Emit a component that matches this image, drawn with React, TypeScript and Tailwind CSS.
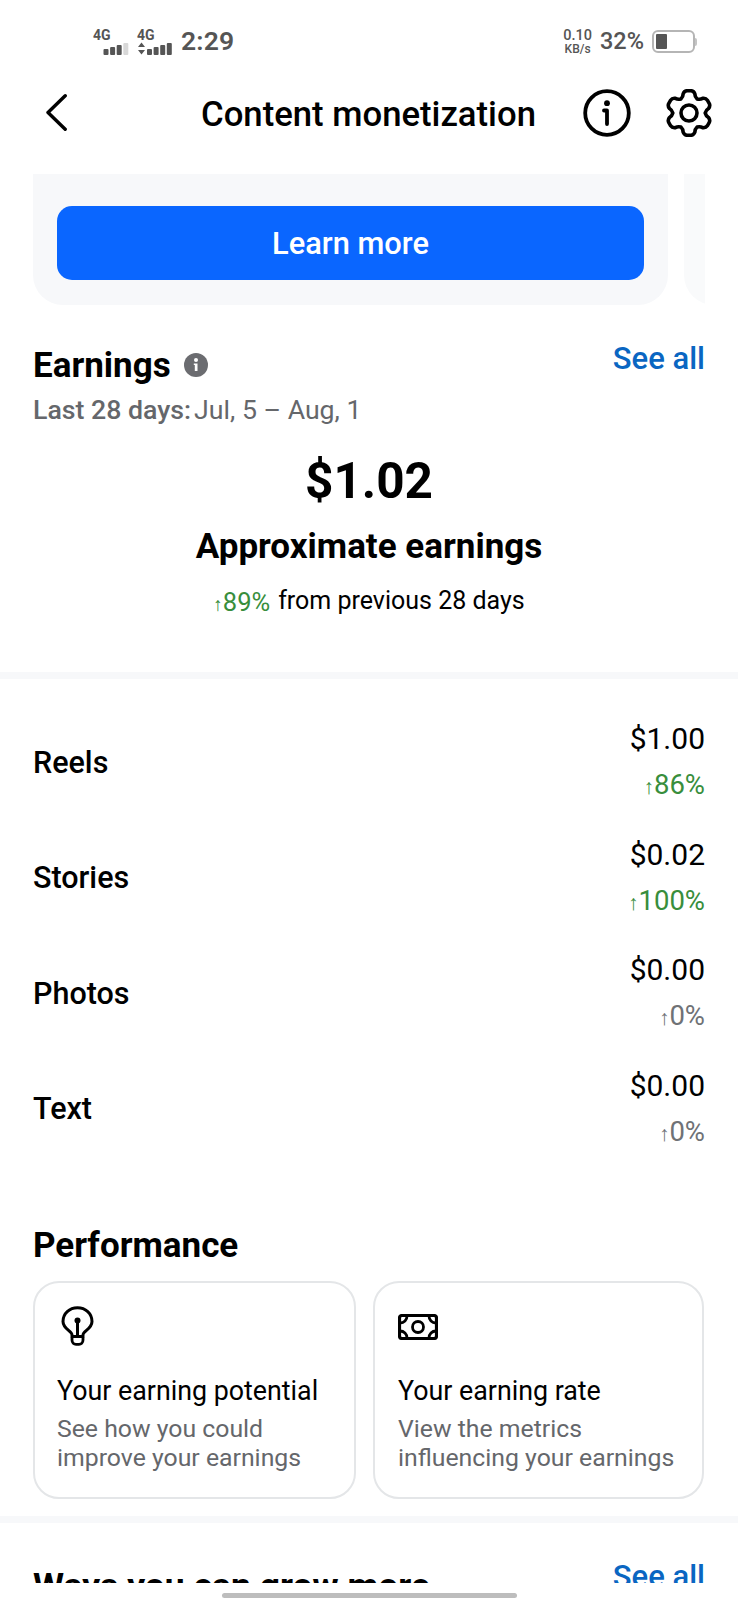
import type { ReactNode } from "react";

const font = { fontFamily: "Roboto, 'Noto Sans', sans-serif" };

function gearPath() {
  const c = 24;
  const pt = (deg: number, r: number) => {
    const a = (deg * Math.PI) / 180;
    return `${(c + r * Math.cos(a)).toFixed(2)} ${(c + r * Math.sin(a)).toFixed(2)}`;
  };
  let d = "";
  for (let k = 0; k < 6; k++) {
    const m = -90 + k * 60;
    const start = pt(m - 30, 16.2);
    if (k === 0) d += `M${start} `;
    d += `Q${pt(m - 20, 17.2)} ${pt(m - 17, 20)} `;
    d += `Q${pt(m - 12, 22.6)} ${pt(m - 5, 22.4)} `;
    d += `L${pt(m + 5, 22.4)} `;
    d += `Q${pt(m + 12, 22.6)} ${pt(m + 17, 20)} `;
    d += `Q${pt(m + 20, 17.2)} ${pt(m + 30, 16.2)} `;
  }
  return d + "Z";
}

function Signal({ bars, arrows }: { bars: string[]; arrows?: boolean }) {
  const heights = [6, 8, 10, 12];
  return (
    <svg width={arrows ? 36 : 27} height="13" viewBox={arrows ? "0 0 36 13" : "0 0 27 13"} className="block">
      {arrows && <path d="M4.500 0.500 L8 5 H1 Z M4.500 12.500 L8 8 H1 Z" fill="#555" />}
      {heights.map((h, i) => (
        <rect key={i} x={(arrows ? 10 : 0.5) + i * 6.6} y={13 - h} width="5" height={h} rx="1" fill={bars[i]} />
      ))}
    </svg>
  );
}

function StatusBar() {
  return (
    <div className="h-[80px] pt-[3px] flex items-center justify-between pl-[93px] pr-[41px] text-[#555]">
      <div className="flex items-center">
        <div className="flex flex-col">
          <span className="text-[14px] leading-[13px] font-bold text-[#555]">4G</span>
          <div className="ml-[10px]">
            <Signal bars={["#555", "#555", "#555", "#d8d8d8"]} />
          </div>
        </div>
        <div className="ml-[7px] flex flex-col">
          <span className="text-[14px] leading-[13px] font-bold text-[#555]">4G</span>
          <Signal arrows bars={["#555", "#555", "#555", "#555"]} />
        </div>
        <span className="ml-[8px] text-[26.500px] leading-none font-semibold tracking-[0.2px]">2:29</span>
      </div>
      <div className="flex items-center">
        <div className="flex flex-col items-center text-[#555]">
          <span className="text-[14.500px] leading-[14px] font-medium">0.10</span>
          <span className="text-[12px] leading-[12px] font-medium">KB/s</span>
        </div>
        <span className="ml-[8px] text-[23.500px] leading-none font-medium">32%</span>
        <div className="ml-[8px] flex items-center">
          <div className="w-[43px] h-[23px] rounded-[6px] border-2 border-[#b5b5b5] p-[2px]">
            <div className="w-[11px] h-full rounded-[1px] bg-[#555]" />
          </div>
          <div className="w-[2px] h-[8px] bg-[#c4c4c4] rounded-r-sm" />
        </div>
      </div>
    </div>
  );
}

function Header() {
  return (
    <div className="h-[65px] mb-[29px] flex items-center pl-[46px]">
      <svg width="21" height="37" viewBox="0 0 21 37" fill="none" className="shrink-0">
        <path d="M19.200 1.800 L2 18.500 L19.200 35.200" stroke="#000" strokeWidth="3.400" strokeLinecap="round" strokeLinejoin="round" />
      </svg>
      <div className="ml-[134px] w-[336px] pt-[3px] shrink-0 whitespace-nowrap text-[34.700px] leading-none font-medium text-black">
        Content monetization
      </div>
      <svg width="48" height="48" viewBox="0 0 48 48" fill="none" className="shrink-0 ml-[46px]">
        <circle cx="24" cy="24" r="21.800" stroke="#000" strokeWidth="3.800" />
        <circle cx="24" cy="14.200" r="2.900" fill="#000" />
        <path d="M21 21.500 H24 V35" stroke="#000" strokeWidth="3.800" strokeLinecap="round" strokeLinejoin="round" />
      </svg>
      <svg width="48" height="48" viewBox="0 0 48 48" fill="none" className="shrink-0 ml-[34px]">
        <path d={gearPath()} stroke="#000" strokeWidth="3.600" strokeLinejoin="round" />
        <circle cx="24" cy="24" r="8" stroke="#000" strokeWidth="3.600" />
      </svg>
    </div>
  );
}

function Carousel() {
  return (
    <div className="ml-[33px] w-[672px] h-[131px] overflow-hidden flex gap-[16px]">
      <div className="w-[635px] shrink-0 bg-[#f7f8fa] rounded-b-[30px] pt-[32px] px-[24px]">
        <div className="h-[74px] pt-[3px] rounded-[15px] bg-[#0a66ff] flex items-center justify-center text-white text-[30.800px] font-medium">
          Learn more
        </div>
      </div>
      <div className="w-[635px] shrink-0 bg-[#f9fafb] rounded-bl-[30px]" />
    </div>
  );
}

function Earnings() {
  return (
    <div className="px-[33px] pt-[37px] h-[367px]">
      <div className="flex justify-between items-start h-[46px]">
        <div className="flex items-center h-[46px]">
          <span className="text-[35px] leading-none font-bold text-black">Earnings</span>
          <svg width="24" height="24" viewBox="0 0 24 24" className="ml-[13px]">
            <circle cx="12" cy="12" r="12" fill="#6b6c70" />
            <circle cx="12" cy="7" r="2" fill="#fff" />
            <path d="M9.800 10.500 H13.500 V18 H10.800 V12 H9.800 Z" fill="#fff" />
          </svg>
        </div>
        <span className="mt-[2px] text-[31px] leading-[30px] font-medium text-[#0a66c2]">See all</span>
      </div>
      <div className="mt-[4px] flex text-[26.700px] leading-[36px] text-[#65676b]">
        <span className="font-medium">Last 28 days:</span>
        <span className="ml-[3px]">Jul, 5 – Aug, 1</span>
      </div>
      <div className="mt-[23px] text-center text-[49.500px] leading-[60px] font-bold text-black">$1.02</div>
      <div className="mt-[14px] text-center text-[35px] leading-[44px] font-bold text-black">Approximate earnings</div>
      <div className="mt-[11px] flex justify-center items-end leading-[36px] text-black">
        <span className="text-[25.500px] text-[#388e3c] relative top-[4px]"><span className="text-[19px]">↑</span>89%</span>
        <span className="ml-[8px] text-[25px]">from previous 28 days</span>
      </div>
    </div>
  );
}

function Row({ label, value, pct, green }: { label: string; value: string; pct: string; green?: boolean }) {
  return (
    <div className="h-[92px] flex items-center justify-between">
      <span className="pt-[2px] text-[30.500px] leading-none font-medium text-black">{label}</span>
      <div className="flex flex-col items-end pt-[2px]">
        <span className="text-[30px] leading-[46px] text-black">{value}</span>
        <span className={`text-[27.500px] leading-[46px] ${green ? "text-[#388e3c]" : "text-[#6f7276]"}`}>
          <span className="text-[21px]">↑</span>{pct}
        </span>
      </div>
    </div>
  );
}

function Bulb() {
  return (
    <svg width="33" height="40" viewBox="0 0 33 40" fill="none">
      <path d="M11 30.500 V29 C11 25 2 23 2 15.500 C2 7.500 8.500 1.700 16.500 1.700 C24.500 1.700 31 7.500 31 15.500 C31 23 22 25 22 29 V30.500 Z" stroke="#000" strokeWidth="3" strokeLinejoin="round" />
      <path d="M11 31 V34 C11 36.800 13 38.300 15 38.300 H18 C20 38.300 22 36.800 22 34 V31" stroke="#000" strokeWidth="2.800" />
      <circle cx="16.500" cy="14.500" r="3" fill="#000" />
      <path d="M16.500 15 V30" stroke="#000" strokeWidth="3" />
    </svg>
  );
}

function Money() {
  return (
    <svg width="40" height="26" viewBox="0 0 40 26" fill="none">
      <rect x="1.500" y="1.500" width="37" height="23" rx="2.500" stroke="#000" strokeWidth="3.200" />
      <circle cx="20" cy="13" r="5.500" stroke="#000" strokeWidth="2.800" />
      <path d="M2 9 C6 9 9 6 9 2 M2 17 C6 17 9 20 9 24 M38 9 C34 9 31 6 31 2 M38 17 C34 17 31 20 31 24" stroke="#000" strokeWidth="2.800" />
    </svg>
  );
}

function PerfCard({ icon, title, lines, className, iconClass }: { icon: ReactNode; title: string; lines: string[]; className: string; iconClass: string }) {
  return (
    <div className={`h-[218px] rounded-[26px] border-2 border-[#e4e6e8] ${className}`}>
      <div className={`h-[85px] flex items-center ${iconClass}`}>{icon}</div>
      <div className="text-[26.800px] leading-[36px] text-black mt-[5px]">{title}</div>
      <div className="text-[24.800px] leading-[29px] text-[#65676b] mt-[5px]">
        {lines.map((l) => <div key={l}>{l}</div>)}
      </div>
    </div>
  );
}

function Divider() {
  return <div className="h-[7px] bg-[#f7f8fa]" />;
}

export default function App() {
  return (
    <div className="w-[738px] h-[1600px] bg-white overflow-hidden flex flex-col" style={font}>
      <div className="h-[1583px] overflow-hidden shrink-0">
        <StatusBar />
        <Header />
        <Carousel />
        <Earnings />
        <Divider />
        <div className="px-[33px] pt-[37px] flex flex-col gap-[23.500px]">
          <Row label="Reels" value="$1.00" pct="86%" green />
          <Row label="Stories" value="$0.02" pct="100%" green />
          <Row label="Photos" value="$0.00" pct="0%" />
          <Row label="Text" value="$0.00" pct="0%" />
        </div>
        <div className="px-[33px] mt-[69px]">
          <div className="text-[35px] leading-[44px] font-bold text-black">Performance</div>
          <div className="mt-[13px] flex gap-[17px]">
            <PerfCard className="w-[323px] pl-[22px]" iconClass="pl-[4px] pt-[2px]" icon={<Bulb />} title="Your earning potential" lines={["See how you could", "improve your earnings"]} />
            <PerfCard className="w-[331px] pl-[23px]" iconClass="pt-[3px]" icon={<Money />} title="Your earning rate" lines={["View the metrics", "influencing your earnings"]} />
          </div>
        </div>
        <div className="mt-[17px]"><Divider /></div>
        <div className="px-[33px] pt-[38px] flex justify-between items-start">
          <span className="mt-[8px] text-[35.500px] leading-none font-bold text-black">Ways you can grow more</span>
          <span className="text-[31px] leading-none font-medium text-[#0a66c2]">See all</span>
        </div>
      </div>
      <div className="flex-1 flex justify-center pt-[10px]">
        <div className="w-[295px] h-[5px] rounded-full bg-[#bdbdbd]" />
      </div>
    </div>
  );
}
